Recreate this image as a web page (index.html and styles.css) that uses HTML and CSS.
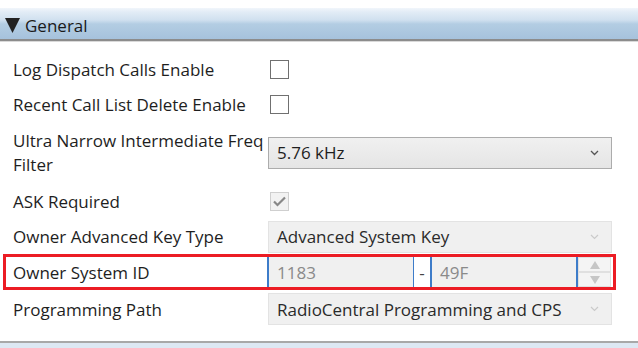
FILE: index.html
```html
<!DOCTYPE html>
<html lang="en">
<head>
  <meta charset="UTF-8">
  <title>General</title>
  <link rel="stylesheet" href="styles.css">
</head>
<body>

  <div class="section-header">
    <svg class="arrow" width="15" height="15" viewBox="0 0 15 15"><path d="M0 0 L15 0 L7.5 15 Z" fill="#222"/></svg>
    <span class="header-title">General</span>
  </div>

  <div class="rows">
    <div class="row">
      <div class="label">Log Dispatch Calls Enable</div>
      <div class="ctrl"><span class="check"></span></div>
    </div>
    <div class="row r2">
      <div class="label">Recent Call List Delete Enable</div>
      <div class="ctrl"><span class="check"></span></div>
    </div>
    <div class="row tall">
      <div class="label nowrap">Ultra Narrow Intermediate Freq<br>Filter</div>
      <div class="ctrl">
        <div class="combo">
          <span>5.76 kHz</span>
          <svg class="chev" width="9" height="6" viewBox="0 0 9 6"><path d="M1 1 L4.5 4.5 L8 1" fill="none" stroke="#555" stroke-width="1.3"/></svg>
        </div>
      </div>
    </div>
    <div class="row">
      <div class="label">ASK Required</div>
      <div class="ctrl">
        <span class="check checked">
          <svg width="13" height="11" viewBox="0 0 13 11"><path d="M1 5.5 L4.5 9 L12 1.5" fill="none" stroke="#888" stroke-width="2.2"/></svg>
        </span>
      </div>
    </div>
    <div class="row r2">
      <div class="label">Owner Advanced Key Type</div>
      <div class="ctrl">
        <div class="combo disabled">
          <span>Advanced System Key</span>
          <svg class="chev" width="9" height="6" viewBox="0 0 9 6"><path d="M1 1 L4.5 4.5 L8 1" fill="none" stroke="#cacaca" stroke-width="1.2"/></svg>
        </div>
      </div>
    </div>
    <div class="row highlight">
      <div class="label">Owner System ID</div>
      <div class="ctrl id-ctrl">
        <div class="idbox">1183</div>
        <div class="dash">-</div>
        <div class="idbox">49F</div>
        <div class="spinner">
          <div class="spin-btn"><svg width="10" height="8" viewBox="0 0 10 8"><path d="M5 0 L10 8 L0 8 Z" fill="#c6c6c6"/></svg></div>
          <div class="spin-btn"><svg width="10" height="8" viewBox="0 0 10 8"><path d="M0 0 L10 0 L5 8 Z" fill="#c6c6c6"/></svg></div>
        </div>
      </div>
    </div>
    <div class="row last">
      <div class="label">Programming Path</div>
      <div class="ctrl">
        <div class="combo disabled">
          <span>RadioCentral Programming and CPS</span>
          <svg class="chev" width="9" height="6" viewBox="0 0 9 6"><path d="M1 1 L4.5 4.5 L8 1" fill="none" stroke="#cacaca" stroke-width="1.2"/></svg>
        </div>
      </div>
    </div>
  </div>

  <div class="bottom-bar"></div>

</body>
</html>
```

FILE: styles.css
```css
body {
  margin: 0;
  padding-top: 8px;
  font-family: "Open Sans", "Noto Sans", sans-serif;
  font-size: 17px;
  color: #1e1e1e;
  background: #fff;
  width: 638px;
  height: 348px;
  overflow: hidden;
}
.section-header {
  height: 33px;
  display: flex;
  align-items: center;
  padding-left: 5px;
  padding-top: 3px;
  box-sizing: border-box;
  background: linear-gradient(#f1f6fb 0px, #e2ecf6 4px, #d0e0ef 12px, #b3cde3 16px, #a6c2dc 100%);
  border-bottom: 2px solid #8c8c8c;
  box-shadow: 0 1px 0 #d9d9d9;
}
.arrow {
  margin-right: 5px;
}
.header-title {
  font-size: 17px;
  color: #1a1a1a;
}
.rows {
  padding-top: 10px;
}
.row {
  display: flex;
  align-items: center;
  height: 36px;
  padding-left: 13px;
}
.row.r2 {
  height: 35px;
}
.row.tall {
  height: 61px;
  line-height: 24px;
}
.row.last {
  height: 38px;
}
.label {
  width: 255px;
  padding-right: 6px;
  box-sizing: border-box;
}
.label.nowrap {
  white-space: nowrap;
}
.ctrl {
  width: 344px;
  display: flex;
  align-items: center;
}
.check {
  width: 19px;
  height: 19px;
  box-sizing: border-box;
  border: 1px solid #707070;
  background: #fff;
  margin-left: 2px;
  display: flex;
  align-items: center;
  justify-content: center;
}
.check.checked {
  border-color: #cfcfcf;
  background: #f2f2f2;
}
.combo {
  width: 100%;
  height: 32px;
  box-sizing: border-box;
  border: 1px solid #acacac;
  background: linear-gradient(#f0f0f0, #e5e5e5);
  display: flex;
  align-items: center;
  justify-content: space-between;
  padding: 0 12px 0 8px;
  color: #1e1e1e;
}
.combo.disabled {
  border-color: #e3e3e3;
  background: #f0f0f0;
  color: #2a2a2a;
}
.row.highlight {
  height: 36px;
  margin-left: 3px;
  margin-right: 22px;
  padding-left: 7px;
  border: 3px solid #ec1c24;
  box-sizing: border-box;
}
.id-ctrl {
  height: 30px;
  margin-left: -1px;
}
.idbox {
  width: 147px;
  height: 30px;
  box-sizing: border-box;
  border-left: 2px solid #3d7cc9;
  background: #f0f0f0;
  color: #8a8a8a;
  padding-left: 8px;
  display: flex;
  align-items: center;
}
.dash {
  width: 17px;
  background: #fff;
  border-left: 1px solid #3d7cc9;
  box-sizing: border-box;
  height: 30px;
  display: flex;
  align-items: center;
  justify-content: center;
  color: #444;
}
.spinner {
  width: 33px;
  height: 30px;
  border-left: 2px solid #3d7cc9;
  display: flex;
  flex-direction: column;
}
.spin-btn {
  flex: 1;
  display: flex;
  align-items: center;
  justify-content: center;
  background: #f4f4f4;
  border: 1px solid #e0e0e0;
}
.bottom-bar {
  position: absolute;
  left: 0;
  right: 0;
  top: 341px;
  height: 7px;
  border-top: 2px solid #a8a8a8;
  background: #dde8f3;
}
```
